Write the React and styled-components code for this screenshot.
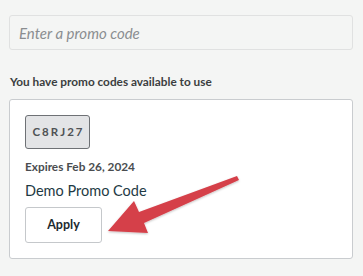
import React from 'react';
import styled, { createGlobalStyle } from 'styled-components';

const GlobalStyle = createGlobalStyle`
  html, body {
    margin: 0;
    padding: 0;
    background: #f4f5f4;
  }
  body {
    font-family: Lato, "Open Sans", sans-serif;
  }
`;

const Page = styled.div`
  position: relative;
  width: 363px;
  height: 276px;
  padding: 15px 10px 0 9px;
  box-sizing: border-box;
  display: flex;
  flex-direction: column;
`;

const PromoInput = styled.input`
  box-sizing: border-box;
  width: 100%;
  height: 35px;
  padding: 0 9px;
  border: 1px solid #e0e1e1;
  border-radius: 3px;
  background: #f4f5f4;
  font-family: inherit;
  font-size: 15px;
  outline: none;

  &::placeholder {
    color: #8a8d90;
    font-style: italic;
  }
`;

const Label = styled.p`
  margin: 24px 0 0 1px;
  font-size: 11.8px;
  font-weight: 700;
  color: #3b3e40;
`;

const Card = styled.div`
  margin-top: 10px;
  height: 160px;
  box-sizing: border-box;
  padding: 15px 15px;
  background: #fff;
  border: 1px solid #c9cccf;
  border-radius: 3px;
  display: flex;
  flex-direction: column;
  align-items: flex-start;
`;

const CodeBadge = styled.div`
  box-sizing: border-box;
  width: 65px;
  height: 34px;
  display: flex;
  align-items: center;
  justify-content: center;
  background: #e3e4e6;
  border: 1px solid #6e7175;
  border-radius: 3px;
  font-size: 11.5px;
  font-weight: 700;
  letter-spacing: 2px;
  color: #4f5255;
  padding-left: 2px;
`;

const Expires = styled.div`
  margin-top: 10px;
  font-size: 11.8px;
  font-weight: 700;
  color: #4a4d50;
`;

const PromoName = styled.div`
  margin-top: 8px;
  font-size: 14.5px;
  color: #1e3a44;
`;

const ApplyButton = styled.button`
  margin-top: 8px;
  width: 77px;
  height: 37px;
  background: #fff;
  border: 1px solid #c5c8cb;
  border-radius: 3px;
  font-family: inherit;
  font-size: 12.5px;
  font-weight: 700;
  color: #1d2a30;
  cursor: pointer;
`;

const Arrow = styled.svg`
  position: absolute;
  left: 0;
  top: 0;
  pointer-events: none;
`;

export default function App() {
  return (
    <>
      <GlobalStyle />
      <Page>
        <PromoInput placeholder="Enter a promo code" />
        <Label>You have promo codes available to use</Label>
        <Card>
          <CodeBadge>C8RJ27</CodeBadge>
          <Expires>Expires Feb 26, 2024</Expires>
          <PromoName>Demo Promo Code</PromoName>
          <ApplyButton>Apply</ApplyButton>
        </Card>
        <Arrow width="363" height="276" viewBox="0 0 363 276">
          <defs>
            <filter id="sh" x="-20%" y="-20%" width="140%" height="140%">
              <feDropShadow dx="0" dy="1" stdDeviation="1" floodColor="#000" floodOpacity="0.25" />
            </filter>
          </defs>
          <polygon
            points="237,176 239,180 144,223 148,233 108,231 134,201 139,212"
            fill="#d5404a"
            filter="url(#sh)"
          />
        </Arrow>
      </Page>
    </>
  );
}
